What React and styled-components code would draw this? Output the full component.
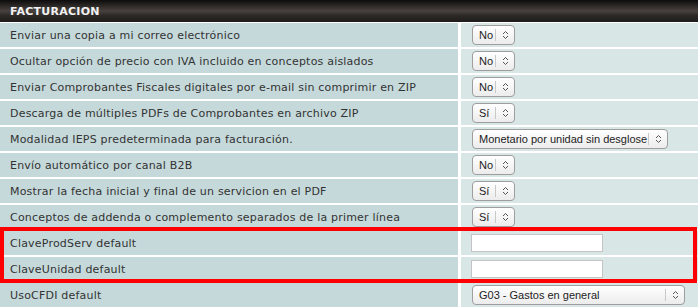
import React from "react";
import styled, { createGlobalStyle } from "styled-components";

const GlobalStyle = createGlobalStyle`
  html, body {
    margin: 0;
    padding: 0;
    background: #ffffff;
  }
`;

const Panel = styled.div`
  position: relative;
  width: 698px;
  height: 308px;
  overflow: hidden;
  font-family: "DejaVu Sans", Verdana, sans-serif;
`;

const Header = styled.div`
  height: 22px;
  display: flex;
  align-items: center;
  padding-left: 10px;
  background: linear-gradient(#0d0c0c 0%, #2a2725 25%, #48423f 50%, #2c2927 70%, #1e1c1b 100%);
  color: #f2f2f2;
  font-weight: bold;
  font-size: 11px;
  letter-spacing: 0.25px;
  border-bottom: 1px solid #ffffff;
`;

const Rows = styled.div`
  display: grid;
  grid-template-columns: 458px 1fr;
  column-gap: 3px;
  row-gap: 2px;
  grid-auto-rows: 24px;
`;

const Label = styled.div`
  display: flex;
  align-items: center;
  padding-left: 10px;
  background: #c5d9da;
  color: #333333;
  font-size: 11px;
  letter-spacing: 0.2px;
  white-space: nowrap;
`;

const Field = styled.div`
  display: flex;
  align-items: center;
  padding-left: 11px;
  background: #d9e6e6;
`;

const SelectBox = styled.div`
  display: flex;
  align-items: center;
  height: 20px;
  width: ${(p) => p.$width}px;
  box-sizing: border-box;
  border: 1px solid #9e9e9e;
  border-radius: 4px;
  background: linear-gradient(#ffffff, #ececec);
  font-family: "Liberation Sans", Arial, sans-serif;
  font-size: 11px;
  color: #222222;
`;

const SelectText = styled.span`
  flex: 1;
  min-width: 0;
  padding: 0 1px 0 6px;
  white-space: nowrap;
`;

const Arrows = styled.span`
  flex: none;
  display: flex;
  align-items: center;
  justify-content: center;
  width: 18px;
  height: 12px;
  border-left: 1px solid #c8c8c8;
`;

const TextInput = styled.input`
  width: 132px;
  height: 18px;
  box-sizing: border-box;
  border: 1px solid #c4c4c4;
  background: #ffffff;
  margin: 0 0 0 -1px;
  padding: 0 3px;
`;

const Highlight = styled.div`
  position: absolute;
  left: 0;
  top: 227px;
  width: 697px;
  height: 56px;
  box-sizing: border-box;
  border: 4px solid #ff0000;
  pointer-events: none;
`;

const Chevrons = () => (
  <svg width="7" height="10" viewBox="0 0 7 10">
    <path d="M1 4 L3.5 1.5 L6 4" fill="none" stroke="#555" strokeWidth="1" />
    <path d="M1 6 L3.5 8.5 L6 6" fill="none" stroke="#555" strokeWidth="1" />
  </svg>
);

const Select = ({ value, width = 43 }) => (
  <SelectBox $width={width}>
    <SelectText>{value}</SelectText>
    <Arrows>
      <Chevrons />
    </Arrows>
  </SelectBox>
);

const rows = [
  ["Enviar una copia a mi correo electrónico", { select: "No" }],
  ["Ocultar opción de precio con IVA incluido en conceptos aislados", { select: "No" }],
  ["Enviar Comprobantes Fiscales digitales por e-mail sin comprimir en ZIP", { select: "No" }],
  ["Descarga de múltiples PDFs de Comprobantes en archivo ZIP", { select: "Sí" }],
  ["Modalidad IEPS predeterminada para facturación.", { select: "Monetario por unidad sin desglose", width: 196 }],
  ["Envío automático por canal B2B", { select: "No" }],
  ["Mostrar la fecha inicial y final de un servicion en el PDF", { select: "Sí" }],
  ["Conceptos de addenda o complemento separados de la primer línea", { select: "Sí" }],
  ["ClaveProdServ default", { input: true }],
  ["ClaveUnidad default", { input: true }],
  ["UsoCFDI default", { select: "G03 - Gastos en general", width: 213 }],
];

export default function App() {
  return (
    <>
      <GlobalStyle />
      <Panel>
        <Header>FACTURACION</Header>
        <Rows>
          {rows.map(([label, ctl]) => (
            <React.Fragment key={label}>
              <Label>{label}</Label>
              <Field>
                {ctl.input ? (
                  <TextInput type="text" />
                ) : (
                  <Select value={ctl.select} width={ctl.width} />
                )}
              </Field>
            </React.Fragment>
          ))}
        </Rows>
        <Highlight />
      </Panel>
    </>
  );
}
